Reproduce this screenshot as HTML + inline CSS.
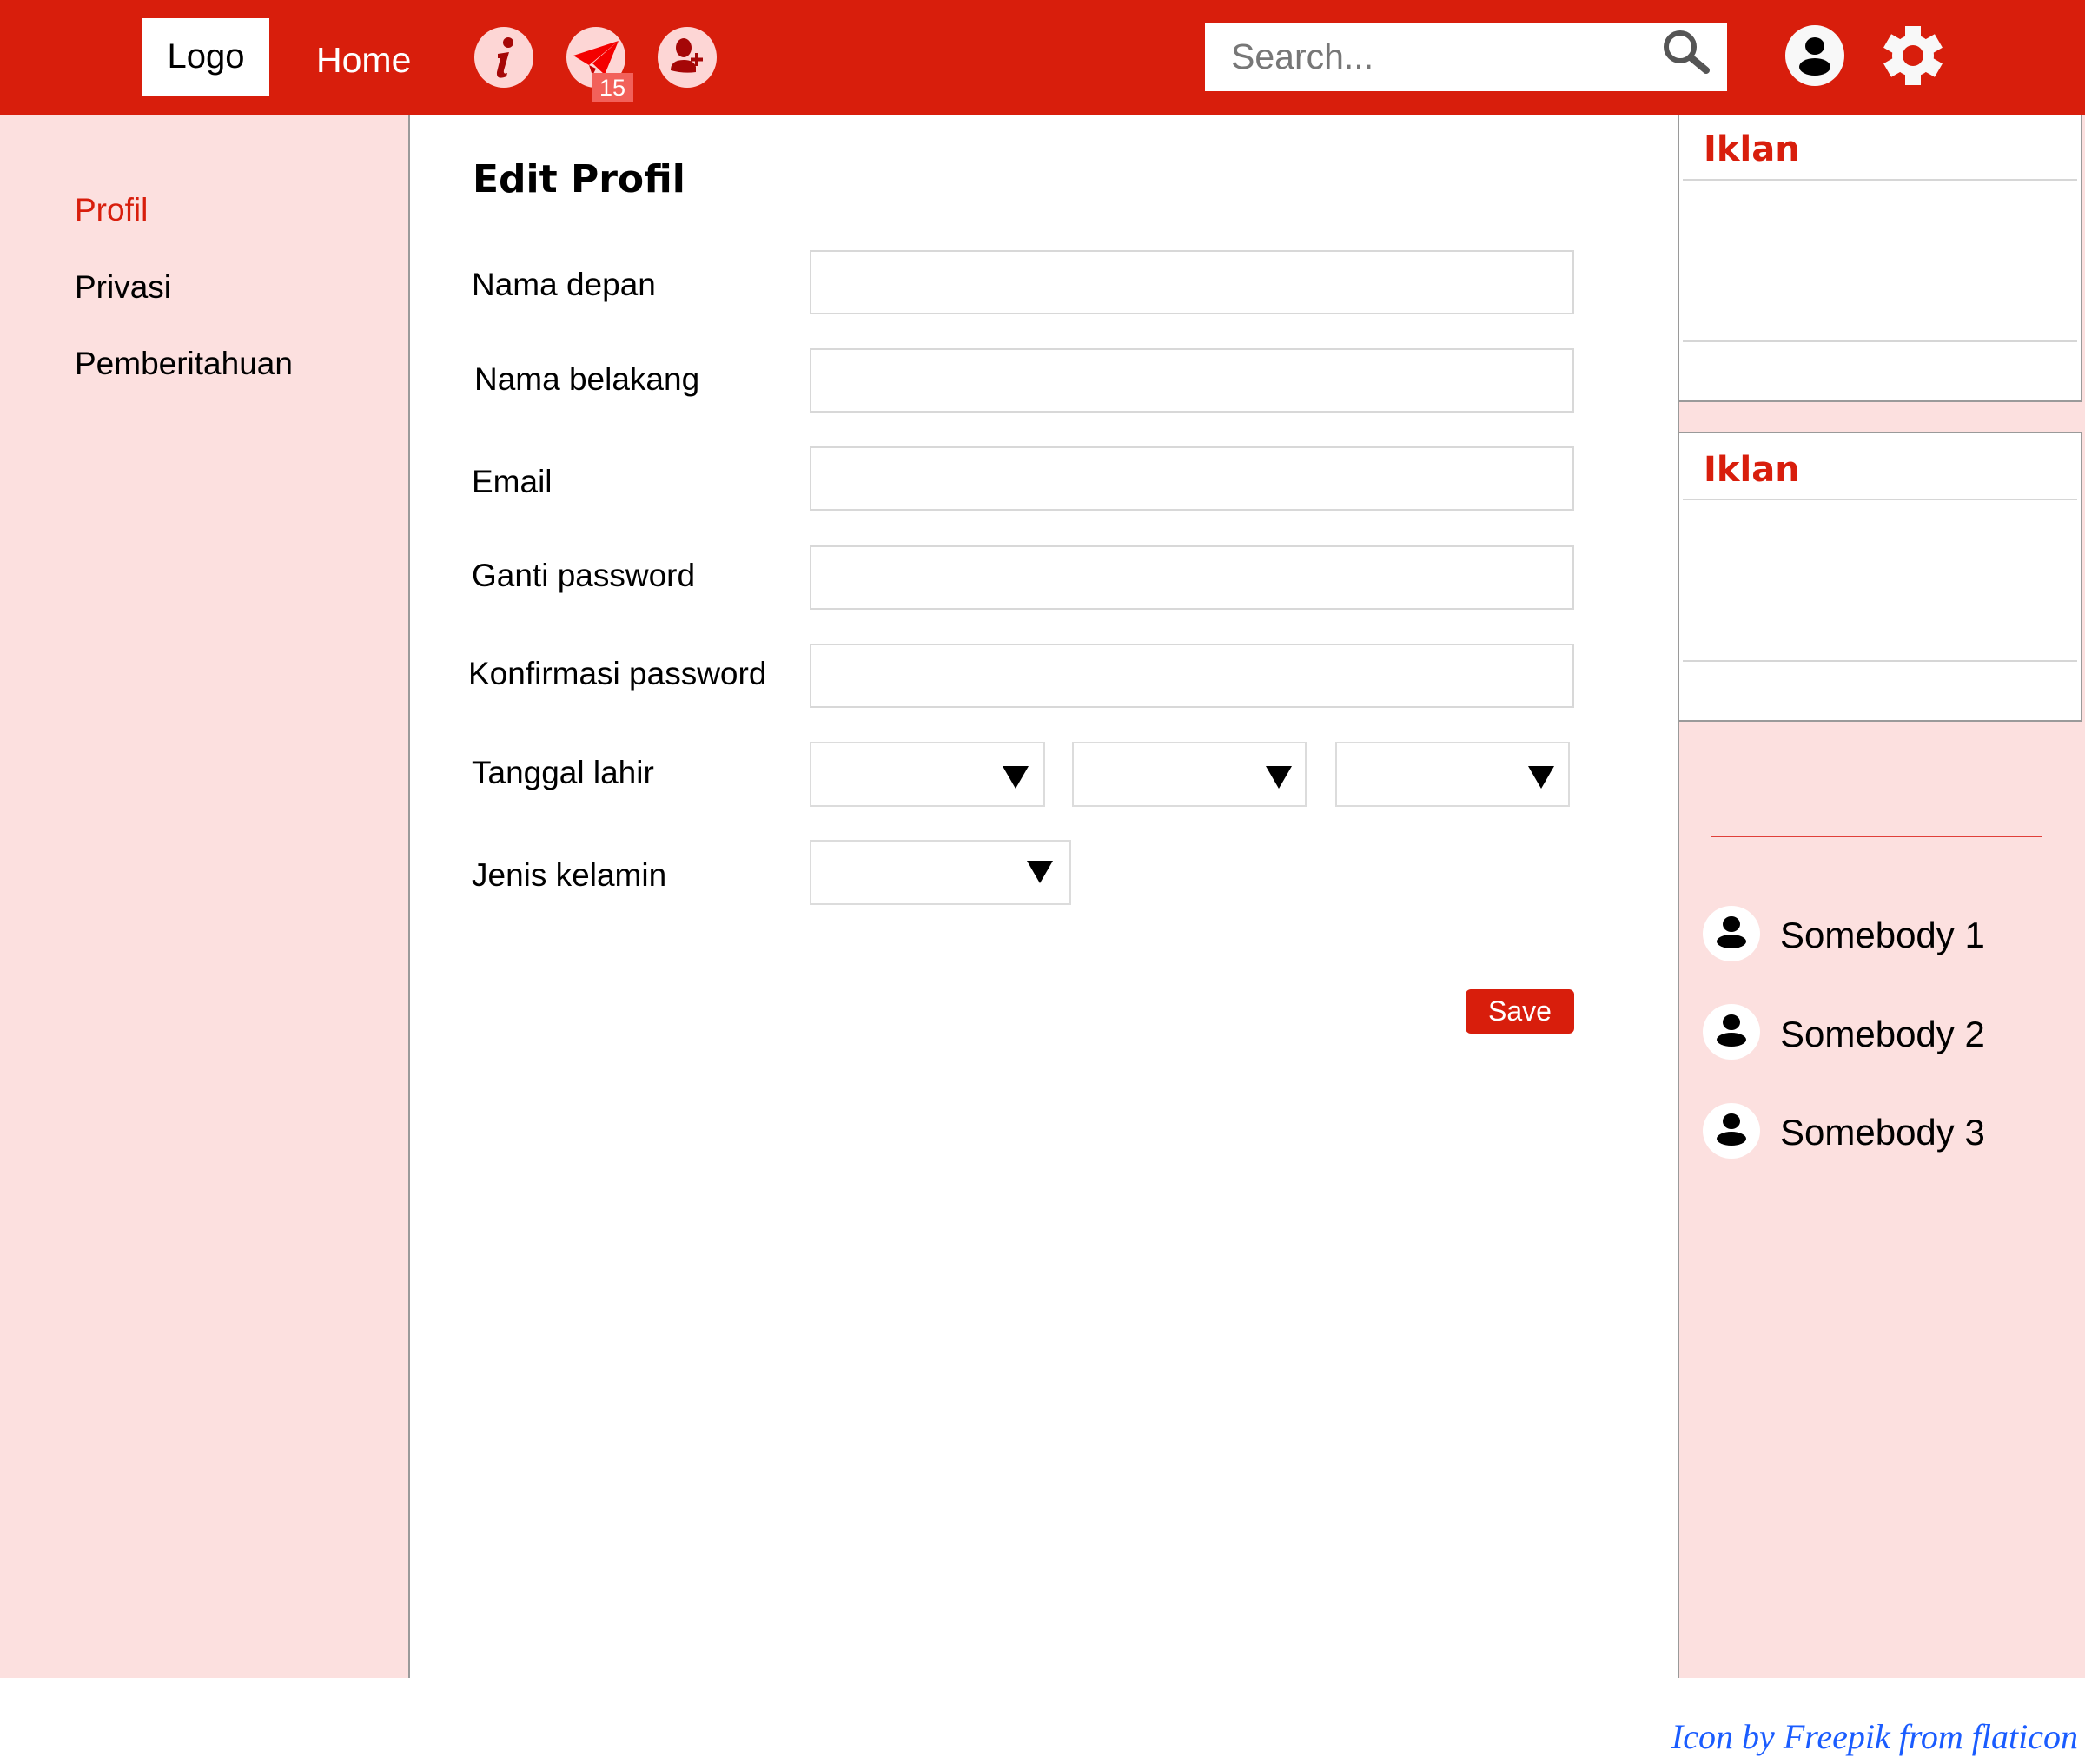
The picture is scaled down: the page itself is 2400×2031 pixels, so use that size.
<!DOCTYPE html>
<html><head><meta charset="utf-8"><style>
*{margin:0;padding:0;box-sizing:border-box}
body{width:2400px;height:2031px;background:#fff;position:relative;overflow:hidden;font-family:"Liberation Sans","DejaVu Sans",sans-serif;color:#000}
.a{position:absolute}
.hdr{left:0;top:0;width:2400px;height:132px;background:#d81e0c}
.inp{position:absolute;left:932px;width:880px;height:74px;border:2px solid #d8d8d8;background:#fff}
.sel{position:absolute;top:854px;height:75px;border:2px solid #dcdcdc;background:#fff}
.tri{position:absolute;width:0;height:0;border-left:15px solid transparent;border-right:15px solid transparent;border-top:26px solid #000}
.lbl{position:absolute;left:543px;font-size:37px;line-height:40px;margin-top:2px}
.side{font-size:37px;position:absolute;left:86px;margin-top:2px}
.ad{position:absolute;left:1933px;width:464px;background:#fff;border:2px solid #9a9a9a;border-left:none}
.ad .t{position:absolute;left:28px;font:bold 40px "DejaVu Sans",sans-serif;color:#d81e0c}
.ad .l{position:absolute;left:4px;right:4px;height:2px;background:#d6d6d6}
.av{position:absolute;left:1960px;width:66px;height:64px;border-radius:50%;background:#fff}
.nm{position:absolute;left:2049px;font-size:42px;margin-top:3px}
</style></head><body>
<div class="a hdr"></div>
<div class="a" style="left:164px;top:21px;width:146px;height:89px;background:#fff;font-size:40px;line-height:89px;text-align:center">Logo</div>
<div class="a" style="left:364px;top:46px;font-size:41px;color:#fff">Home</div>
<svg class="a" style="left:546px;top:31px" width="68" height="70" viewBox="0 0 68 70"><ellipse cx="34" cy="35" rx="34" ry="35" fill="#fdd6d5"/><circle cx="39" cy="18" r="6" fill="#a50707"/><path d="M27 31 L40 29 L34 50 Q33 55 38 53 L37 57 Q25 62 26 52 L30 36 L27 36Z" fill="#a50707"/></svg>
<svg class="a" style="left:652px;top:31px" width="68" height="70" viewBox="0 0 68 70"><ellipse cx="34" cy="35" rx="34" ry="35" fill="#fdd6d5"/><path d="M8 33 L60 16 L26 44Z" fill="#f40000"/><path d="M60 16 L44 55 L30 42Z" fill="#f40000"/><path d="M26 44 L30 56 L34 48Z" fill="#c00000"/></svg>
<div class="a" style="left:681px;top:84px;width:48px;height:34px;background:#f2615a;color:#fff;font-size:27px;text-align:center;line-height:34px">15</div>
<svg class="a" style="left:757px;top:31px" width="68" height="70" viewBox="0 0 68 70"><ellipse cx="34" cy="35" rx="34" ry="35" fill="#fdd6d5"/><ellipse cx="30" cy="24" rx="9" ry="11" fill="#a50707"/><path d="M15 50 Q15 38 30 38 Q42 38 44 46 L44 52 Q30 54 15 50Z" fill="#a50707"/><rect x="43" y="30" width="4" height="15" fill="#a50707"/><rect x="38" y="35.5" width="14" height="4" fill="#a50707"/></svg>
<div class="a" style="left:1387px;top:26px;width:601px;height:79px;background:#fff"></div>
<div class="a" style="left:1417px;top:42px;font-size:41px;color:#777">Search...</div>
<svg class="a" style="left:1912px;top:32px" width="60" height="54" viewBox="0 0 60 54"><circle cx="22" cy="22" r="16" stroke="#555" stroke-width="6" fill="none"/><line x1="34" y1="34" x2="52" y2="49" stroke="#555" stroke-width="8" stroke-linecap="round"/></svg>
<svg class="a" style="left:2054px;top:28px" width="70" height="72" viewBox="0 0 70 72"><ellipse cx="35" cy="36" rx="34" ry="35" fill="#f8f8f8"/><ellipse cx="35" cy="25" rx="11" ry="10" fill="#000"/><ellipse cx="35" cy="49" rx="18" ry="10" fill="#000"/></svg>
<svg class="a" style="left:2168px;top:29px" width="68" height="70" viewBox="-34 -35 68 70"><g fill="#f8f8f8"><circle r="24"/><g id="t"><rect x="-9" y="-34" width="18" height="16"/></g><use href="#t" transform="rotate(60)"/><use href="#t" transform="rotate(120)"/><use href="#t" transform="rotate(180)"/><use href="#t" transform="rotate(240)"/><use href="#t" transform="rotate(300)"/></g><circle r="12" fill="#d81e0c"/></svg>

<div class="a" style="left:0;top:132px;width:472px;height:1800px;background:#fce0df;border-right:2px solid #9a9a9a"></div>
<div class="side" style="top:219px;color:#d81e0c">Profil</div>
<div class="side" style="top:308px">Privasi</div>
<div class="side" style="top:396px">Pemberitahuan</div>

<div class="a" style="left:544px;top:181px;font:bold 44px 'DejaVu Sans',sans-serif">Edit Profil</div>
<div class="lbl" style="top:306px">Nama depan</div>
<div class="lbl" style="top:415px;left:546px">Nama belakang</div>
<div class="lbl" style="top:533px">Email</div>
<div class="lbl" style="top:641px">Ganti password</div>
<div class="lbl" style="top:754px;left:539px">Konfirmasi password</div>
<div class="lbl" style="top:868px">Tanggal lahir</div>
<div class="lbl" style="top:986px">Jenis kelamin</div>
<div class="inp" style="top:288px"></div>
<div class="inp" style="top:401px"></div>
<div class="inp" style="top:514px"></div>
<div class="inp" style="top:628px"></div>
<div class="inp" style="top:741px"></div>
<div class="sel" style="left:932px;width:271px"></div><div class="tri" style="left:1154px;top:882px"></div>
<div class="sel" style="left:1234px;width:270px"></div><div class="tri" style="left:1457px;top:882px"></div>
<div class="sel" style="left:1537px;width:270px"></div><div class="tri" style="left:1759px;top:882px"></div>
<div class="sel" style="left:932px;top:967px;width:301px"></div><div class="tri" style="left:1182px;top:991px"></div>
<div class="a" style="left:1687px;top:1139px;width:125px;height:51px;background:#d81e0c;border-radius:6px;color:#fff;font-size:32px;text-align:center;line-height:51px">Save</div>

<div class="a" style="left:1931px;top:132px;width:469px;height:1800px;background:#fce0df;border-left:2px solid #9a9a9a"></div>
<div class="ad" style="top:132px;height:331px;border-top:none"><div class="t" style="top:17px">Iklan</div><div class="l" style="top:74px"></div><div class="l" style="top:260px"></div></div>
<div class="ad" style="top:497px;height:334px"><div class="t" style="top:19px">Iklan</div><div class="l" style="top:75px"></div><div class="l" style="top:261px"></div></div>
<div class="a" style="left:1970px;top:962px;width:381px;height:2px;background:#e0403a"></div>
<div class="av" style="top:1043px"></div><svg class="a" style="left:1960px;top:1043px" width="66" height="64" viewBox="0 0 66 64"><ellipse cx="33" cy="21" rx="10" ry="9" fill="#000"/><ellipse cx="33" cy="41" rx="17" ry="8" fill="#000"/></svg>
<div class="av" style="top:1156px"></div><svg class="a" style="left:1960px;top:1156px" width="66" height="64" viewBox="0 0 66 64"><ellipse cx="33" cy="21" rx="10" ry="9" fill="#000"/><ellipse cx="33" cy="41" rx="17" ry="8" fill="#000"/></svg>
<div class="av" style="top:1270px"></div><svg class="a" style="left:1960px;top:1270px" width="66" height="64" viewBox="0 0 66 64"><ellipse cx="33" cy="21" rx="10" ry="9" fill="#000"/><ellipse cx="33" cy="41" rx="17" ry="8" fill="#000"/></svg>
<div class="nm" style="top:1050px">Somebody 1</div>
<div class="nm" style="top:1164px">Somebody 2</div>
<div class="nm" style="top:1277px">Somebody 3</div>

<div class="a" style="right:8px;top:1976px;font:italic 40px 'Liberation Serif',serif;color:#1a5cff">Icon by Freepik from flaticon</div>
</body></html>
